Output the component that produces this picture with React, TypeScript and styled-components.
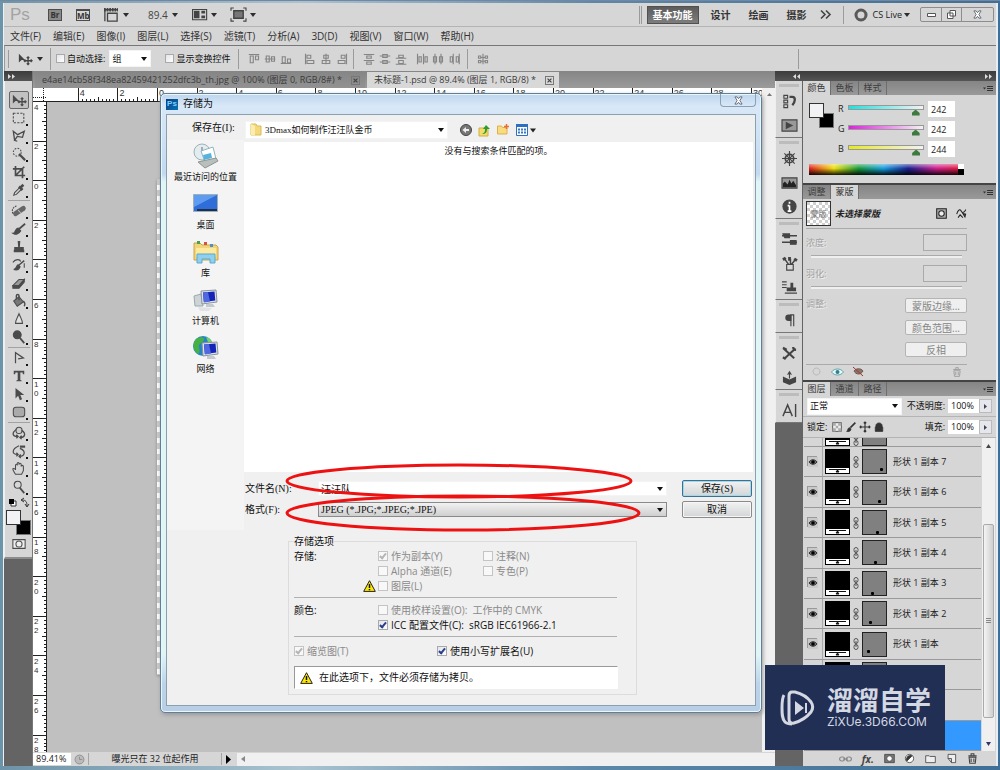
import React from "react";
import styled, { createGlobalStyle } from "styled-components";

const UI = `"Open Sans", "Noto Sans CJK SC", sans-serif`;
const SONG = `"Liberation Serif", "Noto Sans CJK SC", serif`;

const Global = createGlobalStyle`
  *, *::before, *::after { box-sizing: border-box; }
  body { margin: 0; background: #7fa3b8; font-family: ${UI}; font-size: 10px; line-height: 12px; color: #222; }
  button, input, select { font: inherit; color: inherit; margin: 0; padding: 0; border-radius: 0; }
  button { background: none; border: 0; }
  p, h2, ul { margin: 0; padding: 0; font-size: inherit; font-weight: inherit; list-style: none; }
`;

/* ---------- window frame ---------- */

const Desktop = styled.div`
  position: relative;
  display: flex;
  flex-direction: column;
  height: 100vh;
  min-height: 770px;
  overflow: hidden;
  padding: 2px 2px 4px 3px;
  background: linear-gradient(90deg, #6d93a8, #a9c3d0 30%, #5b87a8 60%, #3f6f96);
  border-top: 1px solid #7587a0;
`;

const Frame = styled.div`
  display: flex;
  flex-direction: column;
  flex: 1;
  min-height: 0;
  background: #d6d6d6;
  border-left: 1px solid #e8f4f4;
  border-right: 2px solid #e4eef4;
`;

const AppBar = styled.header`
  display: flex;
  align-items: center;
  flex: none;
  height: 24px;
  padding: 0 2px 0 6px;
  border-bottom: 1px solid #b4b4b4;
`;

const PsMark = styled.span`
  width: 38px;
  font-family: "Liberation Sans", sans-serif;
  font-size: 17px;
  line-height: 20px;
  color: #a3a3a3;
`;

const Badge = styled.span<{ $folder?: boolean }>`
  width: 14px;
  height: 12px;
  margin-right: 14px;
  border: 1px solid #4c4c4c;
  border-top-width: ${(p) => (p.$folder ? 2 : 1)}px;
  background: ${(p) => (p.$folder ? "#d6d6d6" : "#8a8a8a")};
  font-size: 8px;
  line-height: 9px;
  font-weight: 700;
  text-align: center;
  color: #333;
`;

const BarButton = styled.button<{ $w: number }>`
  display: flex;
  align-items: center;
  justify-content: space-between;
  width: ${(p) => p.$w}px;
  margin-right: 14px;
  color: #444;
  span { padding-left: 5px; }
`;

const Arrow = styled.i`
  flex: none;
  border: 3px solid transparent;
  border-top: 4px solid #2d2d2d;
  border-bottom: 0;
`;

const Spacer = styled.span`
  flex: 1;
`;

const Workspace = styled.button<{ $on?: boolean }>`
  width: ${(p) => (p.$on ? 52 : 38)}px;
  height: 18px;
  font-weight: 700;
  font-size: 10px;
  ${(p) =>
    p.$on
      ? "background: linear-gradient(#5c5c5c, #7d7d7d); border: 1px solid #505050; color: #fff; margin-right: 3px;"
      : "color: #333;"}
`;

const Rule = styled.span<{ $h: number; $m: string }>`
  flex: none;
  width: 1px;
  height: ${(p) => p.$h}px;
  margin: ${(p) => p.$m};
  background: #9b9b9b;
`;

const More = styled.button`
  width: 20px;
  color: #444;
  svg { display: block; margin: 0 auto; }
`;

const Live = styled.button`
  display: flex;
  align-items: center;
  gap: 5px;
  margin-right: 10px;
  font-size: 9px !important;
  i { margin-left: -3px; }
`;

const WindowButtons = styled.div`
  display: flex;
  height: 15px;
  border: 1px solid #8d8d8d;
  border-radius: 2px;
  button { display: grid; place-items: center; width: 20px; }
  button + button { border-left: 1px solid #8d8d8d; }
  button:last-child { width: 32px; }
`;

const MenuBar = styled.nav`
  display: flex;
  align-items: center;
  flex: none;
  gap: 12px;
  height: 18px;
  padding-left: 6px;
  color: #333;
  white-space: nowrap;
`;

const OptionsBar = styled.div`
  display: flex;
  align-items: center;
  flex: none;
  height: 26px;
  padding-left: 3px;
  border-top: 1px solid #777;
  border-left: 1px solid #999;
  font-size: 9px;
  color: #111;
`;

const OptLabel = styled.label<{ $m: string }>`
  display: flex;
  align-items: center;
  gap: 2px;
  margin: ${(p) => p.$m};
  white-space: nowrap;
`;

const Check = styled.input.attrs({ type: "checkbox" })<{ $s?: number }>`
  appearance: none;
  flex: none;
  position: relative;
  width: ${(p) => p.$s ?? 9}px;
  height: ${(p) => p.$s ?? 9}px;
  border: 1px solid #a9a9a9;
  background: linear-gradient(135deg, #e2e4e8, #fff);
  &:checked::after {
    content: "";
    position: absolute;
    left: 2px;
    top: 0;
    width: 4px;
    height: 7px;
    border: solid #2b3f8f;
    border-width: 0 2px 2px 0;
    transform: rotate(40deg);
  }
  &:disabled { border-color: #c4c4c4; background: #f8f8f8; }
  &:disabled::after { border-color: #b5b5b5; }
`;

const Picker = styled.span<{ $w?: number; $h: number; $look?: "plain" | "button" }>`
  position: relative;
  display: flex;
  align-items: center;
  width: ${(p) => (p.$w ? `${p.$w}px` : "auto")};
  height: ${(p) => p.$h}px;
  background: ${(p) => (p.$look === "button" ? "linear-gradient(#f2f2f2, #cfcfcf)" : "#fff")};
  border: ${(p) => (p.$look === "button" ? "1px solid #8a8a8a" : "1px solid #f4f4f4")};
  color: #111;
  select, input {
    appearance: none;
    flex: 1;
    min-width: 0;
    height: 100%;
    padding: 0 14px 0 2px;
    border: 0;
    outline: 0;
    background: transparent;
  }
  &::after {
    content: "";
    position: absolute;
    right: 3px;
    border: 3px solid transparent;
    border-top: 4px solid #111;
    border-bottom: 0;
    pointer-events: none;
  }
`;

const AlignGroup = styled.div<{ $ml: number }>`
  display: flex;
  gap: 4px;
  margin-left: ${(p) => p.$ml}px;
  color: #858585;
  button { display: block; line-height: 0; }
`;

const Glyph = styled.svg`
  display: block;
  flex: none;
  overflow: visible;
`;

/* ---------- main area ---------- */

const Main = styled.div`
  display: flex;
  flex: 1;
  min-height: 0;
`;

const ToolColumn = styled.aside`
  flex: none;
  width: 29px;
  background: #646464;
  border-right: 1px solid #777;
`;

const DarkStrip = styled.div<{ $start?: number }>`
  display: flex;
  align-items: center;
  justify-content: space-between;
  flex: none;
  height: 10px;
  padding: 0 4px 0 ${(p) => p.$start ?? 4}px;
  background: linear-gradient(#3c3c3c, #555);
  color: #ddd;
`;

const ToolBox = styled.div`
  display: flex;
  flex-direction: column;
  align-items: center;
  padding: 10px 0 4px;
  background: #d6d6d6;
  border-bottom: 2px solid #8c8c8c;
  border-left: 1px solid #f0f0f0;
`;

const Tool = styled.button<{ $on?: boolean; $single?: boolean }>`
  position: relative;
  display: grid;
  place-items: center;
  width: 20px;
  height: 18px;
  border: ${(p) => (p.$on ? "1px solid #666" : "0")};
  border-radius: 2px;
  background: ${(p) => (p.$on ? "#c2c2c2" : "none")};
  color: #4b4b4b;
  &::after {
    content: "";
    position: absolute;
    right: 1px;
    bottom: 1px;
    width: 2px;
    height: 2px;
    background: ${(p) => (p.$on || p.$single ? "none" : "#111")};
  }
`;

const ToolRule = styled.span`
  width: 22px;
  height: 1px;
  margin: 1px 0;
  background: #a2a2a2;
`;

const Doc = styled.section`
  display: flex;
  flex-direction: column;
  flex: 1;
  min-width: 0;
`;

const TabBar = styled.div`
  display: flex;
  align-items: flex-end;
  flex: none;
  height: 17px;
  gap: 2px;
  padding-left: 2px;
  background: linear-gradient(#858585, #9b9b9b);
`;

const DocTab = styled.button<{ $on?: boolean }>`
  display: flex;
  align-items: center;
  gap: 9px;
  height: 16px;
  padding: 0 5px 0 7px;
  white-space: nowrap;
  font-size: 9px;
  background: ${(p) => (p.$on ? "#d8d8d8" : "linear-gradient(#868686, #929292)")};
  color: #3a3a3a;
  svg { border: 1px solid #777; }
`;

const DocBody = styled.div`
  display: flex;
  flex: 1;
  min-height: 0;
`;

const DocMain = styled.div`
  display: flex;
  flex-direction: column;
  flex: 1;
  min-width: 0;
`;

const HRuler = styled.svg`
  display: block;
  flex: none;
  width: 100%;
  height: 14px;
  background: #fff;
  font-family: "Liberation Sans", sans-serif;
`;

const CanvasRow = styled.div`
  display: flex;
  flex: 1;
  min-height: 0;
`;

const VRuler = styled.svg`
  display: block;
  flex: none;
  width: 14px;
  height: 100%;
  background: #fff;
  font-family: "Liberation Sans", sans-serif;
`;

const Canvas = styled.div`
  flex: 1;
  min-width: 0;
  overflow: hidden;
  background: #c0c0c0;
  padding: 77px 0 0 110px;
`;

const Artboard = styled.div`
  width: 75%;
  height: 496px;
  background: repeating-conic-gradient(#fff 0 25%, #cbcbcb 0 50%) 0 0 / 11px 11px;
  box-shadow: 0 1px 3px #888;
`;

const VScroll = styled.div`
  flex: none;
  width: 13px;
  background: #f0f0f0;
  padding: 5px 5px;
`;

const StatusBar = styled.footer`
  display: flex;
  align-items: center;
  flex: none;
  height: 14px;
  background: #d6d6d6;
  color: #222;
`;

const Zoom = styled.input`
  width: 38px;
  height: 12px;
  margin-right: 3px !important;
  padding-left: 3px !important;
  border: 0;
  background: #fff;
  font-size: 9px !important;
`;

const StatusText = styled.span`
  width: 134px;
  margin-left: 3px;
  border: solid #a5a5a5;
  border-width: 0 1px;
  text-align: center;
  font-size: 9px;
`;

const HScroll = styled.div`
  flex: 1;
  display: flex;
  align-items: center;
  height: 13px;
  padding-left: 4px;
  margin-left: 3px;
  background: #f0f0f0;
`;

/* ---------- right side ---------- */

const Side = styled.aside`
  display: flex;
  flex-direction: column;
  flex: none;
  width: 221px;
  background: #646464;
`;

const SideBody = styled.div`
  display: flex;
  flex: 1;
  min-height: 0;
`;

const Dock = styled.div`
  flex: none;
  width: 28px;
  padding-right: 1px;
`;

const DockGroup = styled.div`
  padding-top: 8px;
  background: #d6d6d6;
  border-bottom: 1px solid #777;
  border-left: 1px solid #eee;
  background-image: linear-gradient(#bcbcbc, #bcbcbc);
  background-size: 20px 3px;
  background-position: 3px 3px;
  background-repeat: no-repeat;
  button { display: grid; place-items: center; width: 100%; height: 24px; color: #444; }
`;

const Panels = styled.div`
  display: flex;
  flex-direction: column;
  flex: 1;
  min-width: 0;
`;

const Panel = styled.section<{ $grow?: boolean }>`
  display: flex;
  flex-direction: column;
  flex: ${(p) => (p.$grow ? "1" : "none")};
  min-height: 0;
  background: #d6d6d6;
  & + & { border-top: 2px solid #444; }
`;

const PanelTabs = styled.div`
  display: flex;
  align-items: center;
  flex: none;
  height: 14px;
  padding-right: 3px;
  background: linear-gradient(#858585, #999);
  color: #444;
`;

const PanelTab = styled.button<{ $on?: boolean }>`
  width: 28px;
  height: 14px;
  border-right: 1px solid #6e6e6e;
  background: ${(p) => (p.$on ? "#d6d6d6" : "none")};
  font-size: 9px;
  color: ${(p) => (p.$on ? "#333" : "#3d3d3d")};
`;

const ColorBody = styled.div`
  display: grid;
  grid-template-columns: 29px minmax(0, 1fr);
  height: 88px;
  padding: 4px 32px 5px 6px;
`;

const Swatches = styled.div<{ $mt: number }>`
  position: relative;
  width: 25px;
  height: 25px;
  margin-top: ${(p) => p.$mt}px;
  &::before, &::after {
    content: "";
    position: absolute;
    width: 15px;
    height: 15px;
  }
  &::before { right: 0; bottom: 0; background: #000; border: 1px solid #777; }
  &::after { left: 0; top: 0; background: #f2f2f4; border: 1px solid #333; }
`;

const Channel = styled.label<{ $c: string }>`
  display: flex;
  align-items: center;
  height: 20px;
  margin-right: 9px;
  font-size: 9px;
  line-height: 12px;
  span { width: 10px; }
  input[type="range"] {
    appearance: none;
    flex: 1;
    min-width: 0;
    height: 13px;
    margin: 2px 4px 0 0;
    background: none;
  }
  input[type="range"]::-webkit-slider-runnable-track {
    height: 5px;
    margin-bottom: 6px;
    border: 1px solid #999;
    background: linear-gradient(90deg, ${(p) => p.$c}, #f2f2f2);
  }
  input[type="range"]::-webkit-slider-thumb {
    appearance: none;
    width: 8px;
    height: 6px;
    margin-top: 4px;
    background: #3d7a3d;
    clip-path: polygon(50% 0, 100% 60%, 100% 100%, 0 100%, 0 60%);
  }
`;

const NumberBox = styled.input`
  width: 27px;
  height: 16px;
  padding-left: 3px !important;
  border: 0;
  background: #fff;
  font-size: 9px !important;
`;

const Spectrum = styled.div`
  grid-column: 1 / -1;
  display: flex;
  height: 11px;
  margin-top: 2px;
  background:
    linear-gradient(rgba(255, 255, 255, 0.5), transparent 40%, rgba(0, 0, 0, 0.9)),
    linear-gradient(90deg, #e02020, #f0e010 16%, #1a9a3a 32%, #18a0e0 48%, #1a2090 64%, #d02090 82%, #e02030);
  &::after { content: ""; width: 6px; margin-left: auto; background: linear-gradient(#fff 50%, #000 50%); }
`;

const MaskBody = styled.div`
  display: flex;
  flex-direction: column;
  padding: 2px 29px 0 3px;
  height: 181px;
  font-size: 9px;
  color: #a2a2a2;
`;

const MaskHead = styled.div`
  display: flex;
  align-items: center;
  gap: 4px;
  padding-bottom: 2px;
  border-bottom: 1px solid #aaa;
  color: #222;
  strong { flex: 1; font-style: italic; }
  button + button { margin-left: 5px; }
`;

const MaskThumb = styled.span`
  width: 25px;
  height: 25px;
  border: 1px solid #333;
  background: repeating-conic-gradient(#fff 0 25%, #cfcfcf 0 50%) 0 0 / 6px 6px;
  color: #777;
  font-size: 8px;
  line-height: 23px;
  text-align: center;
`;

const MaskField = styled.label`
  display: grid;
  grid-template-columns: 1fr 44px;
  align-items: center;
  height: 31px;
  padding-top: 3px;
  text-shadow: 1px 1px #eee;
  input { height: 17px; width: 44px; border: 1px solid #aaa; background: #d9d9d9; }
  &::after {
    content: "";
    grid-column: 1 / -1;
    height: 3px;
    margin: 0 5px;
    background: #efefef;
    border-top: 1px solid #aaa;
  }
`;

const MaskActions = styled.div`
  display: flex;
  justify-content: space-between;
  flex: 1;
  padding-top: 7px;
  text-shadow: 1px 1px #eee;
  div { display: flex; flex-direction: column; gap: 7px; }
  button {
    width: 62px;
    height: 15px;
    border: 1px solid #b4b4b4;
    border-radius: 2px;
    background: #efefef;
    color: #858585;
    font-size: 10px;
    text-shadow: none;
  }
`;

const MaskFoot = styled.div`
  display: flex;
  align-items: center;
  gap: 9px;
  height: 16px;
  padding: 0 5px 2px;
  border-top: 1px solid #aaa;
  button:last-child { margin-left: auto; }
`;

const LayerBar = styled.div`
  display: flex;
  align-items: center;
  flex: none;
  height: 21px;
  padding: 0 4px 0 4px;
  border-bottom: 1px solid #b4b4b4;
  font-size: 9px;
  color: #111;
  white-space: nowrap;
  label { display: flex; align-items: center; gap: 3px; }
`;

const Percent = styled.span`
  display: flex;
  height: 14px;
  background: #fff;
  input { width: 31px; border: 0; padding-left: 3px; background: none; }
  button { width: 13px; border: 1px solid #bbb; background: #e6e6ee; display: grid; place-items: center; }
`;

const LockIcons = styled.span`
  display: flex;
  flex: 1;
  gap: 4px;
  margin-left: 5px;
  color: #333;
`;

const LayerArea = styled.div`
  display: flex;
  flex: 1;
  min-height: 0;
`;

const LayerList = styled.ul`
  display: flex;
  flex-direction: column;
  flex: 1;
  min-width: 0;
  overflow: hidden;
  padding: 0 1px;
`;

const Layer = styled.li<{ $cut?: boolean; $selected?: boolean }>`
  display: flex;
  align-items: ${(p) => (p.$cut ? "flex-end" : "center")};
  flex: ${(p) => (p.$cut ? "0 0 9px" : "1 1 0")};
  min-height: 0;
  overflow: hidden;
  border-bottom: 1px solid #999;
  background: ${(p) => (p.$selected ? "#3399ff" : "none")};
  font-size: 9px;
  color: #222;
  white-space: nowrap;
`;

const Eye = styled.button`
  display: grid;
  place-items: center;
  align-self: stretch;
  flex: none;
  width: 19px;
  border-right: 1px solid #aaa;
  svg { background: #c9c9c9; box-shadow: -1px -1px #999; }
`;

const FillThumb = styled.span`
  flex: none;
  display: grid;
  align-content: end;
  width: 25px;
  height: 25px;
  margin: 0 3px 0 2px;
  border: 1px solid #000;
  background: linear-gradient(#000 18px, #fff 18px);
`;

const ShapeThumb = styled.span`
  flex: none;
  width: 25px;
  height: 25px;
  margin: 0 6px 0 3px;
  border: 1px solid #222;
  background: #808080;
`;

const LayerScroll = styled.div`
  display: flex;
  flex-direction: column;
  align-items: center;
  flex: none;
  width: 13px;
  margin-right: 1px;
  padding: 6px 0 5px;
  background: #f0f0f0;
`;

const ScrollThumb = styled.div`
  width: 11px;
  height: 194px;
  margin: auto 0 24px;
  border: 1px solid #aaa;
  border-radius: 2px;
  background: linear-gradient(90deg, #f4f4f4, #cfcfcf);
  display: grid;
  place-items: center;
`;

const LayerFoot = styled.div`
  display: flex;
  align-items: center;
  justify-content: space-between;
  flex: none;
  height: 15px;
  padding: 0 18px 0 36px;
  color: #444;
`;

/* ---------- save dialog ---------- */

const Dialog = styled.form`
  position: absolute;
  left: 160px;
  right: 238px;
  top: 92px;
  padding: 0 5px 6px;
  border: 1px solid #5f7f96;
  border-radius: 5px;
  background:
    linear-gradient(#bcd5ee 0, #d9e8f8 12px, #c3d9f0 80px, #e0f6f6 88px, #e0f6f6 560px, #bdd3ea 590px, #b7cfe6);
  box-shadow: inset 0 0 0 1px #eaf6fc, 1px 2px 4px #999;
  font-family: ${SONG};
  color: #111;
`;

const TitleBar = styled.div`
  display: flex;
  align-items: center;
  height: 20px;
  gap: 5px;
`;

const PsIcon = styled.span`
  width: 12px;
  height: 11px;
  background: linear-gradient(135deg, #0b3d80, #0873b8);
  color: #7cd0ff;
  font: 700 8px/10px "Liberation Sans", sans-serif;
  text-align: center;
`;

const CloseButton = styled.button`
  align-self: flex-start;
  display: grid;
  place-items: center;
  width: 36px;
  height: 13px;
  margin-left: auto;
  border: 1px solid #8aa0b5;
  border-top: 0;
  border-radius: 0 0 4px 4px;
`;

const DialogBody = styled.div`
  border: 1px solid #8aa0ac;
  background: #f0f0f0;
  padding-bottom: 10px;
`;

const LookIn = styled.div`
  display: flex;
  align-items: center;
  height: 25px;
  padding: 4px 0 0 25px;
  label { width: 53px; padding-bottom: 3px; }
  label + span { width: 203px; font-size: 9px; padding-left: 4px; gap: 1px; }
  button { margin-left: 7px; }
  button:nth-of-type(1) { margin-left: 12px; }
`;

const Split = styled.div`
  display: grid;
  grid-template-columns: 77px 1fr;
`;

const Places = styled.ul`
  background: #f4f4f4;
  padding-top: 1px;
  li button {
    display: flex;
    flex-direction: column;
    align-items: center;
    width: 100%;
    height: 48px;
    font-size: 9px;
  }
  svg { margin: 2px 0 2px; }
`;

const FileArea = styled.div`
  padding: 2px 2px 0 0;
`;

const FileList = styled.div`
  height: 330px;
  padding-top: 3px;
  background: #fff;
  text-align: center;
  font-size: 9px;
`;

const FieldRow = styled.div`
  display: flex;
  align-items: center;
  height: 21px;
  label { width: 74px; padding-left: 1px; }
  label + span { flex: 1; }
`;

const DialogButton = styled.button<{ $main?: boolean }>`
  width: 70px;
  height: 17px;
  margin: 0 1px 0 15px;
  border: 1px solid ${(p) => (p.$main ? "#3a7191" : "#8a8a8a")};
  border-radius: 2px;
  box-shadow: inset 0 0 0 1px ${(p) => (p.$main ? "#a5d6ea" : "#f6f6f6")};
  background: linear-gradient(#f2f2f2, #d2d5d6);
`;

const Fields = styled.div`
  margin-top: 6px;
  height: 52px;
`;

const SaveOptions = styled.fieldset`
  width: 349px;
  max-width: 100%;
  margin: 5px 0 0 121px;
  padding: 1px 19px 5px 5px;
  border: 1px solid #dcdcdc;
  font-family: ${UI};
  font-size: 10px;
  legend { height: 12px; padding: 0; }
`;

const OptGrid = styled.div`
  display: grid;
  grid-template-columns: 69px 15px 105px 1fr;
  grid-auto-rows: 15px;
  align-items: center;
  white-space: nowrap;
`;

const OptCheck = styled.label<{ $off?: boolean; $col?: string }>`
  display: flex;
  align-items: center;
  gap: 3px;
  grid-column: ${(p) => p.$col ?? "3"};
  color: ${(p) => (p.$off ? "#8a8a8a" : "#111")};
`;

const Line = styled.hr`
  height: 1px;
  margin: 4px 0;
  border: 0;
  background: #b0b0b0;
`;

const Lower = styled.div`
  display: grid;
  grid-template-columns: 143px 1fr;
  height: 25px;
  padding-bottom: 5px;
  align-items: center;
`;

const Notice = styled.p`
  display: flex;
  align-items: center;
  gap: 6px;
  height: 23px;
  margin-right: -1px;
  padding-left: 5px;
  border: 1px solid #fff;
  border-top-color: #999;
  border-left-color: #999;
  background: #fff;
  font-family: ${SONG};
  font-size: 10px;
`;

const Marks = styled.svg`
  position: absolute;
  left: 120px;
  top: 362px;
  pointer-events: none;
`;

const Watermark = styled.div`
  position: absolute;
  right: 55px;
  bottom: 20px;
  display: flex;
  align-items: center;
  gap: 13px;
  width: 180px;
  height: 85px;
  padding-left: 15px;
  background: #222f55;
  color: #d4d8e2;
`;

const MarkText = styled.div`
  font-family: Inter, "Noto Sans CJK SC", sans-serif;
  p:first-child { font-size: 26px; line-height: 28px; font-weight: 700; }
  p:last-child { font-size: 12px; line-height: 13px; }
`;

/* ---------- drawings ---------- */

type IconProps = { children: React.ReactNode; s?: number; w?: number; vb?: string };
const Ic = ({ children, s = 14, w = 1.2, vb = "0 0 16 16" }: IconProps) => (
  <Glyph width={s} height={s} viewBox={vb} fill="none" stroke="currentColor" strokeWidth={w} aria-hidden="true">
    {children}
  </Glyph>
);

const MoveArt = (
  <>
    <path d="M1 2v10l3-3h4z" fill="currentColor" stroke="none" />
    <path
      d="M11.500 5.500v9M7 10h9M10 7l1.500-1.500L13 7M10 13l1.500 1.500L13 13M8.500 8.500L7 10l1.500 1.500M14.500 8.500L16 10l-1.500 1.500"
      strokeWidth="1.500"
    />
  </>
);

const toolArt: (React.ReactNode | "rule")[] = [
  MoveArt,
  <rect x="1.500" y="2.500" width="12" height="11" strokeDasharray="2.500 1.500" />,
  <path d="M3 13L1.500 2.500l5 4 7.500-4-2 7-6-1L3 13l3 1" strokeWidth="1.500" />,
  <>
    <circle cx="6" cy="6" r="4.500" strokeDasharray="2 1.500" />
    <path d="M8 8l7 7" strokeWidth="2.500" />
  </>,
  <path d="M4 1v11h11M1 4.500h11V15M4 12L14 2" strokeWidth="1.900" />,
  <>
    <path d="M2 14l1-3 6-6 2 2-6 6z" />
    <path d="M8 4l4 4M10 5l3-3" strokeWidth="3" />
  </>,
  "rule",
  <>
    <path d="M4 11L13 5" strokeWidth="5.500" strokeLinecap="round" stroke="#666" />
    <path d="M7 7l3 3" stroke="#bbb" />
    <path d="M1 11c-2-5 1-8 5-9" strokeDasharray="2 1" />
  </>,
  <>
    <path d="M8 8l7-6" strokeWidth="2" />
    <path d="M1 13c3 0 2-5 6-6l3 3c-2 4-6 5-9 3z" fill="currentColor" />
  </>,
  <path d="M6.500 1h3L9 8h4.500v3H14v3H2v-3h.5V8H7z" fill="currentColor" stroke="none" />,
  <>
    <path d="M2 13c3 0 3-4 5-5l2 2c-1 3-4 4-7 3zM8 8l6-5" fill="currentColor" strokeWidth="1.600" />
    <path d="M1 5c3-4 8-4 9-1M14 6v5" />
  </>,
  <>
    <path d="M1 11l7-7h6l-6 7z" fill="#999" />
    <path d="M1 11v3h7l6-7V4l-6 7z" fill="currentColor" />
  </>,
  <>
    <path d="M2 8l6-5 5 6-7 5z" fill="#777" />
    <path d="M5 6V2c0-2 3-2 3 0v5M13 8c2 2 2 4 1 6" strokeWidth="1.600" />
  </>,
  <path d="M8 2c2 5 4 7 4 11H4c0-4 2-6 4-11z" fill="#e2e2e2" />,
  <>
    <circle cx="6" cy="5.500" r="4.500" fill="currentColor" />
    <path d="M9 9l5 6" strokeWidth="2" />
  </>,
  "rule",
  <path d="M4 14V2l9 6-6 1" strokeWidth="1.400" />,
  <path d="M2 2h12v4h-1.500L12 4H9.500v8.500L11 13v1H5v-1l1.500-.5V4H4l-.5 2H2z" fill="currentColor" stroke="none" />,
  <path d="M4 1v12l3-3 2 5 2.500-1-2-5H14z" fill="currentColor" stroke="none" />,
  <rect x="1.500" y="2.500" width="13" height="11" rx="3" fill="#aaa" />,
  "rule",
  <>
    <circle cx="8" cy="5" r="3.500" fill="#ccc" />
    <path d="M5 4C-1 8 1 12 6 12M11 5c6 4 3 8-1 8M5 10l2 2-2 2M11 11l-2 2 2 2" strokeWidth="1.500" />
  </>,
  <>
    <path d="M8 2C-1 6 0 12 6 12M9 5c8 3 5 9 0 9M5 10l2 2-2 2M10 12l-2 2 2 2" strokeWidth="1.400" />
    <path d="M9 3h6" strokeWidth="2.500" />
  </>,
  <path d="M4 14C2 11 1 9 1 8s2-1 3 1V4c0-2 2-2 2 0V2c0-2 2-2 2 0v1c0-2 2.500-2 2.500 0v2c0-1.500 2.500-1.500 2.500 0v5l-2 4z" />,
  <>
    <circle cx="6.500" cy="5.500" r="4" />
    <path d="M9 9l5 6" strokeWidth="2" />
  </>,
];

const dockArt: React.ReactNode[][] = [
  [
    <>
      <path d="M2 1.500h4v3H2zM2 6.500h4v3H2zM2 11.500h4v3H2z" />
      <path d="M8 3h3c4 0 3 6 0 9" strokeWidth="2.500" />
    </>,
    <>
      <path d="M0 2h16v12H0z" fill="#999" />
      <path d="M4 4l8 4-8 4z" fill="currentColor" stroke="none" />
    </>,
  ],
  [
    <>
      <circle cx="8" cy="8" r="4.500" strokeWidth="1.800" />
      <path d="M8 0v16M0 8h16M2.500 2.500l11 11M13.500 2.500l-11 11" />
    </>,
    <>
      <path d="M0 3h16v11H0z" fill="#999" />
      <path d="M1 13V9l2-2 3 3 2-5 2 4 2-3 3 5v2z" fill="#222" stroke="none" />
    </>,
    <>
      <circle cx="8" cy="8" r="7" fill="#444" />
      <path d="M8 3v2M8 7v6M6 7h2M6 13h4" stroke="#fff" strokeWidth="1.800" />
    </>,
  ],
  [
    <>
      <path d="M0 4h16M0 11h16" strokeWidth="1.500" />
      <path d="M1 2h7v4H3zM9 9h6v4H9z" fill="currentColor" />
    </>,
    <>
      <path d="M5 9h7v6H5z" />
      <path d="M7 9L2 2M9 9V3M10 9l5-6" strokeWidth="1.600" />
      <path d="M1 4l3-2M8 1v4M13 3l3 2" strokeWidth="3" />
    </>,
    <>
      <path d="M0 2h5M0 5h5M0 8h5M3 14h13" />
      <path d="M9 3h3v5h3v4H5V8h4z" fill="currentColor" stroke="none" />
    </>,
  ],
  [
    <>
      <path d="M9.500 2v12M12.500 2v12M9 2h4" />
      <path d="M10 1.500H7a3.500 3.500 0 000 7h3z" fill="currentColor" stroke="none" />
    </>,
  ],
  [
    <>
      <path d="M2 3l11 10M14 3L3 13" strokeWidth="2.200" />
      <path d="M1 2l4 2M12 1c0 3 1 3 3 3M1 12l3 2" strokeWidth="2.500" />
    </>,
    <>
      <path d="M1 7l7 3 7-3v6l-7 3-7-3z" fill="currentColor" stroke="none" />
      <path d="M8 9V2M6 5l2-3 2 3" />
    </>,
  ],
  [<path d="M1 14L6 2l5 12M3 10h6M14.500 1v14" strokeWidth="1.500" />],
];

const alignArt = [
  "M1 2h14M3 4h4v9H3zM10 4h4v5h-4z",
  "M1 8h14M3 4h4v8H3zM10 5h4v6h-4z",
  "M1 14h14M3 5h4v8H3zM10 8h4v5h-4z",
  "M2 1v14M4 3h5v4H4zM4 10h9v4H4z",
  "M8 1v14M5 3h6v4H5zM3 10h10v4H3z",
  "M14 1v14M7 3h5v4H7zM3 10h9v4H3z",
  "M1 2h14M5 4h6v3H5zM1 10h14M5 12h6v3H5z",
  "M1 4h14M5 2h6v4H5zM1 12h14M5 10h6v4H5z",
  "M1 7h14M5 3h6v3H5zM1 15h14M5 10h6v4H5z",
  "M2 1v14M4 5h3v7H4zM10 1v14M12 5h3v7h-3z",
  "M4 1v14M2 5h4v7H2zM12 1v14M10 5h4v7h-4z",
  "M7 1v14M3 5h3v7H3zM15 1v14M11 5h3v7h-3z",
  "M8 1v14M2 4h3v3H2zM2 10h3v3H2zM11 4h3v3h-3zM11 10h3v3h-3zM5 6h6M5 11h6",
];

const Warn = () => (
  <Glyph width="13" height="12" viewBox="0 0 13 12" aria-hidden="true">
    <path d="M6.500.7L12.300 11.400H.7z" fill="#ffe600" stroke="#222" />
    <path d="M6.500 4v4M6.500 9v1.300" stroke="#111" strokeWidth="1.500" />
  </Glyph>
);

const Cross = () => (
  <Glyph width="9" height="9" viewBox="0 0 10 10" fill="#fff" stroke="#5b6570">
    <path d="M1 1h2.500L5 3l1.500-2H9L6.500 5 9 9H6.500L5 7 3.500 9H1l2.500-4z" />
  </Glyph>
);

const Chevrons = ({ left }: { left?: boolean }) => (
  <Glyph width="7" height="5" viewBox="0 0 7 5" fill="currentColor">
    <path d={left ? "M3 0v5L0 2.500zM7 0v5L4 2.500z" : "M0 0v5l3-2.500zM4 0v5l3-2.500z"} />
  </Glyph>
);

const PITCH = 39.6;
const TopRuler = () => (
  <HRuler aria-hidden="true">
    <g stroke="#222" shapeRendering="crispEdges">
      {Array.from({ length: 205 }, (_, i) => {
        const x = 125 + ((i - 20) * PITCH) / 10 - 0.5;
        if (x < 14) return null;
        const h = i % 10 === 0 ? 14 : i % 5 === 0 ? 5 : 3;
        return <line key={i} x1={x} x2={x} y1={14 - h} y2={14} />;
      })}
      <path d="M0 13.500H742" />
      <path d="M10.500 0V14M0 9.500H14" strokeDasharray="1 1" />
    </g>
    <g fontSize="9" fill="#333">
      {Array.from({ length: 18 }, (_, i) => (
        <text key={i} x={126 + (i - 2) * PITCH} y="8">
          {Math.abs(i - 2) * 2}
        </text>
      ))}
    </g>
  </HRuler>
);

const LeftRuler = () => (
  <VRuler aria-hidden="true">
    <g stroke="#222" shapeRendering="crispEdges">
      {Array.from({ length: 170 }, (_, i) => {
        const y = (i * PITCH) / 10 - 0.5;
        const w = i % 10 === 0 ? 14 : i % 5 === 0 ? 5 : 3;
        return <line key={i} y1={y} y2={y} x1={14 - w} x2={14} />;
      })}
      <path d="M13.500 0V700" />
    </g>
    <g fontSize="8" fill="#333">
      {Array.from({ length: 17 }, (_, i) =>
        String(Math.abs(i - 2) * 2)
          .split("")
          .map((d, k) => (
            <text key={`${i}-${k}`} x="1" y={8 + Math.floor(i * PITCH) + k * 9}>
              {d}
            </text>
          ))
      )}
    </g>
  </VRuler>
);

const Screen = ({ x, y }: { x: number; y: number }) => (
  <g transform={`translate(${x} ${y})`}>
    <path d="M0 1l15-1 1 12-15 2z" fill="#dde3e8" stroke="#8a949c" />
    <path d="M2 2.500l11.500-1 .8 9-11.500 1.600z" fill="#1524b8" />
    <path d="M2 2.500l5-.4 2 9.400-6 .9z" fill="#5068e0" />
    <path d="M5 14h7l2 3H5z" fill="#c3c9cd" />
  </g>
);

const placeArt = [
  <>
    <circle cx="9" cy="9" r="8" fill="#e3ecef" stroke="#9fb0b5" />
    <path d="M9 4v5l4 2" stroke="#668" fill="none" />
    <path d="M8 8l12-4 3 12-11 3z" fill="#fff" stroke="#8fb5c4" />
    <path d="M10 12l8-2 1 5-8 2z" fill="#56b3dd" />
    <path d="M5 19l18-4 2 3-13 7z" fill="#b9bfbc" stroke="#8d9490" />
  </>,
  <>
    <path d="M.5 3.500h24v17H.5z" fill="#2f6ed8" stroke="#9db0b8" />
    <path d="M1 4h23L1 16z" fill="#5f9bf0" />
    <path d="M4 18h20v2H4z" fill="#1b2f50" />
  </>,
  <>
    <path d="M1 4h6l2 2h14l2 2v13H1z" fill="#f2d578" stroke="#c8a64c" />
    <path d="M3 9h20v9H3z" fill="#fbeaa0" />
    <path d="M4 2h3v3H4z" fill="#4aa04a" />
    <path d="M11 3h3v3h-3z" fill="#d8503f" />
    <path d="M17 5h3v3h-3z" fill="#4f8fd0" />
    <path d="M4 24v-9h18v9h-5v-4H9v4z" fill="#8fd0ee" stroke="#5ba8d0" />
  </>,
  <>
    <path d="M1 9l7-2 2 12-8 0z" fill="#cdd3d6" stroke="#9aa" />
    <Screen x={8} y={3} />
    <path d="M5 20l14 1-3 3H7z" fill="#dfe3e6" />
  </>,
  <>
    <circle cx="10" cy="11" r="10" fill="#2584c8" />
    <path d="M3 4c5-3 9-2 8 1s-5 3-5 6 2 6-1 8C0 16-1 8 3 4z" fill="#47b044" />
    <path d="M13 2c4 1 6 4 7 7l-5-2z" fill="#7bd06a" />
    <Screen x={9} y={7} />
  </>,
];
const placeNames = ["最近访问的位置", "桌面", "库", "计算机", "网络"];

const dots: [number, number][] = [
  [17, 18],
  [15, 19],
  [13, 20],
  [11, 20],
  [8, 20],
  [6, 19],
  [4, 17],
];
const layerNames = [
  "形状 1 副本 7",
  "形状 1 副本 6",
  "形状 1 副本 5",
  "形状 1 副本 4",
  "形状 1 副本 3",
  "形状 1 副本 2",
  "形状 1 副本",
];

const LayerThumbs = ({ dot }: { dot?: [number, number] }) => (
  <>
    <FillThumb>
      <Glyph width="23" height="5" viewBox="0 0 23 5" stroke="#111" fill="#111">
        <path d="M3 1.500h17" />
        <path d="M10 4l1.500-2L13 4z" />
      </Glyph>
    </FillThumb>
    <Glyph width="6" height="12" viewBox="0 0 6 12" fill="none" stroke="#555">
      <rect x="1" y=".5" width="4" height="5" rx="2" />
      <rect x="1" y="6.500" width="4" height="5" rx="2" />
      <path d="M3 3v6" />
    </Glyph>
    <ShapeThumb>
      {dot && (
        <Glyph width="23" height="23">
          <rect x={dot[0]} y={dot[1]} width="3" height="3" rx="1" />
        </Glyph>
      )}
    </ShapeThumb>
  </>
);

const EyeIcon = () => (
  <Glyph width="10" height="10" viewBox="0 0 10 10">
    <path d="M1 5c2-3 6-3 8 0-2 3-6 3-8 0z" fill="#777" stroke="#333" />
    <circle cx="5" cy="5" r="1.800" fill="#000" />
  </Glyph>
);

const PanelMenu = () => (
  <Glyph width="10" height="7" viewBox="0 0 10 7" stroke="#333">
    <path d="M0 2.500h3L1.500 4.500z" fill="#333" stroke="none" />
    <path d="M4 1.500h6M4 3.500h6M4 5.500h6" />
  </Glyph>
);

const TabStrip = ({ names, on }: { names: string[]; on: number }) => (
  <PanelTabs>
    {names.map((n, i) => (
      <PanelTab key={n} $on={i === on}>
        {n}
      </PanelTab>
    ))}
    <Spacer />
    <PanelMenu />
  </PanelTabs>
);

const Trash = ({ s = 11 }: { s?: number }) => (
  <Ic s={s}>
    <path d="M3 6h10l-1 9H4zM2 4h12M6 4V1h4v3M6 8v5M10 8v5" strokeWidth="1.600" />
  </Ic>
);

/* ---------- sections ---------- */

const AlignButtons = ({ from, to, ml }: { from: number; to: number; ml: number }) => (
  <AlignGroup $ml={ml}>
    {alignArt.slice(from, to).map((d) => (
      <button key={d} type="button">
        <Ic s={12} w={1.5}>
          <path d={d} />
        </Ic>
      </button>
    ))}
  </AlignGroup>
);

const Header = () => (
  <>
    <AppBar>
      <PsMark>Ps</PsMark>
      <Badge>Br</Badge>
      <Badge $folder>Mb</Badge>
      <BarButton $w={25} aria-label="查看额外内容">
        <Ic>
          <path d="M0 2h16M1 2v13M4 6h11v9H4z" strokeWidth="1.500" />
          <path d="M0 2h16" strokeWidth="4" strokeDasharray="2 1" />
        </Ic>
        <Arrow />
      </BarButton>
      <BarButton $w={35}>
        <span>89.4</span>
        <Arrow />
      </BarButton>
      <BarButton $w={25} aria-label="排列文档">
        <Ic s={15}>
          <path d="M.6 2.600h15v11H.6z" />
          <path d="M2 4h6v8H2zM10 4h4v3h-4zM10 9h4v3h-4z" fill="currentColor" stroke="none" />
        </Ic>
        <Arrow />
      </BarButton>
      <BarButton $w={25} aria-label="屏幕模式">
        <Ic s={15}>
          <path d="M3 4h10v8H3z" fill="#777" strokeWidth="1.500" />
          <path d="M0 4V1h3M13 1h3v3M16 12v3h-3M3 15H0v-3" />
        </Ic>
        <Arrow />
      </BarButton>
      <Spacer />
      <Rule $h={18} $m="0 1px 0 0" />
      <Rule $h={18} $m="0 5px 0 0" />
      <Workspace $on>基本功能</Workspace>
      <Workspace>设计</Workspace>
      <Workspace>绘画</Workspace>
      <Workspace>摄影</Workspace>
      <More aria-label="更多">
        <Glyph width="11" height="9" viewBox="0 0 11 9" fill="none" stroke="#444" strokeWidth="1.600">
          <path d="M1 .5l4 4-4 4M6 .5l4 4-4 4" />
        </Glyph>
      </More>
      <Rule $h={18} $m="0 10px 0 7px" />
      <Live>
        <Glyph width="14" height="14" viewBox="0 0 14 14" fill="none" stroke="#5a5a5a" strokeWidth="3">
          <circle cx="7" cy="7" r="5" />
        </Glyph>
        CS Live
        <Arrow />
      </Live>
      <WindowButtons>
        <button aria-label="最小化">
          <Glyph width="9" height="4" fill="#fff" stroke="#555">
            <path d="M.5.5h8v3h-8z" />
          </Glyph>
        </button>
        <button aria-label="还原">
          <Glyph width="9" height="9" fill="#fff" stroke="#555">
            <path d="M3 .5h5.500V6H3zM.5 3H6v5.500H.5z" />
          </Glyph>
        </button>
        <button aria-label="关闭">
          <Cross />
        </button>
      </WindowButtons>
    </AppBar>
    <MenuBar>
      {["文件(F)", "编辑(E)", "图像(I)", "图层(L)", "选择(S)", "滤镜(T)", "分析(A)", "3D(D)", "视图(V)", "窗口(W)", "帮助(H)"].map((m) => (
        <button key={m}>{m}</button>
      ))}
    </MenuBar>
    <OptionsBar>
      <Rule $h={18} $m="0 9px 0 0" />
      <BarButton $w={25} aria-label="移动工具">
        <Ic>{MoveArt}</Ic>
        <Arrow />
      </BarButton>
      <Rule $h={22} $m="0 5px 0 -7px" />
      <OptLabel $m="0 4px 0 0">
        <Check />
        自动选择:
      </OptLabel>
      <Picker $w={42} $h={17}>
        <select aria-label="自动选择">
          <option>组</option>
        </select>
      </Picker>
      <OptLabel $m="0 8px 0 14px">
        <Check />
        显示变换控件
      </OptLabel>
      <Rule $h={20} $m="0" />
      <AlignButtons from={0} to={3} ml={9} />
      <AlignButtons from={3} to={6} ml={12} />
      <Rule $h={20} $m="0 0 0 5px" />
      <AlignButtons from={6} to={9} ml={9} />
      <AlignButtons from={9} to={12} ml={9} />
      <Rule $h={20} $m="0 0 0 7px" />
      <AlignButtons from={12} to={13} ml={9} />
      <Spacer />
      <Rule $h={20} $m="0 197px 0 0" />
    </OptionsBar>
  </>
);

const Tools = () => (
  <ToolColumn>
    <DarkStrip>
      <Chevrons />
    </DarkStrip>
    <ToolBox>
      {toolArt.map((a, i) =>
        a === "rule" ? (
          <ToolRule key={i} />
        ) : (
          <Tool key={i} $on={i === 0} type="button">
            <Ic>{a}</Ic>
          </Tool>
        )
      )}
      <Glyph width="22" height="14" viewBox="0 2 22 14">
        <path d="M3 7h5v5H3z" fill="#fff" stroke="#333" />
        <path d="M1 5h5v5H1z" />
        <path d="M14 6c4 0 5 2 5 6M16 4l-3 2 3 2M17 10l2 3 2-3" fill="none" stroke="#333" />
      </Glyph>
      <Swatches $mt={0} />
      <Tool type="button" $single>
        <Ic>
          <path d="M1 3h14v10H1z" fill="#eee" />
          <circle cx="8" cy="8" r="3.500" />
        </Ic>
      </Tool>
    </ToolBox>
  </ToolColumn>
);

const TabClose = () => (
  <Glyph width="9" height="9" viewBox="0 0 9 9" stroke="#444" strokeWidth="1.500">
    <path d="M2 2l5 5M7 2L2 7" />
  </Glyph>
);

const Document = () => (
  <Doc>
    <TabBar>
      <DocTab>
        e4ae14cb58f348ea82459421252dfc3b_th.jpg @ 100% (图层 0, RGB/8#) *
        <TabClose />
      </DocTab>
      <DocTab $on>
        未标题-1.psd @ 89.4% (图层 1, RGB/8) *
        <TabClose />
      </DocTab>
    </TabBar>
    <DocBody>
      <DocMain>
        <TopRuler />
        <CanvasRow>
          <LeftRuler />
          <Canvas>
            <Artboard />
          </Canvas>
        </CanvasRow>
      </DocMain>
      <VScroll>
        <Glyph width="5" height="3" viewBox="0 0 5 3">
          <path d="M0 3h5L2.500 0z" fill="#777" />
        </Glyph>
      </VScroll>
    </DocBody>
    <StatusBar>
      <Zoom aria-label="缩放" defaultValue="89.41%" />
      <Ic s={11}>
        <circle cx="8" cy="8" r="6.500" fill="#bbb" stroke="#888" />
        <path d="M8 4v4h4" stroke="#888" />
      </Ic>
      <StatusText>曝光只在 32 位起作用</StatusText>
      <Glyph width="12" height="9" viewBox="0 0 12 9">
        <path d="M4 0l5 4.500L4 9z" />
      </Glyph>
      <HScroll>
        <Glyph width="4" height="6" viewBox="0 0 4 6" fill="#888">
          <path d="M4 0v6L0 3z" />
        </Glyph>
      </HScroll>
    </StatusBar>
  </Doc>
);

const ColorPanel = () => (
  <Panel>
    <TabStrip names={["颜色", "色板", "样式"]} on={0} />
    <ColorBody>
      <Swatches $mt={4} />
      <div>
        {[
          ["R", "#20e0e0", 242],
          ["G", "#e020e0", 242],
          ["B", "#e8e820", 244],
        ].map(([n, c, v]) => (
          <Channel key={n} $c={c as string}>
            <span>{n}</span>
            <input type="range" min="0" max="255" defaultValue={v} />
            <NumberBox aria-label={n as string} defaultValue={v} />
          </Channel>
        ))}
      </div>
      <Spectrum />
    </ColorBody>
  </Panel>
);

const MaskPanel = () => (
  <Panel>
    <TabStrip names={["调整", "蒙版"]} on={1} />
    <MaskBody>
      <MaskHead>
        <MaskThumb>蒙版</MaskThumb>
        <strong>未选择蒙版</strong>
        <button aria-label="像素蒙版">
          <Ic s={11} w={1.5}>
            <path d="M1 1h14v14H1z" fill="#aaa" />
            <circle cx="8" cy="8" r="4" fill="#eee" />
          </Ic>
        </button>
        <button aria-label="矢量蒙版">
          <Ic s={11}>
            <path d="M1 9C3 2 6 1 8 5s6-1 6-3M3 14l3-4 4 4M10 8l4 1-1 4z" strokeWidth="1.500" />
          </Ic>
        </button>
      </MaskHead>
      <MaskField>
        浓度:
        <input disabled />
      </MaskField>
      <MaskField>
        羽化:
        <input disabled />
      </MaskField>
      <MaskActions>
        调整:
        <div>
          <button>蒙版边缘...</button>
          <button>颜色范围...</button>
          <button>反相</button>
        </div>
      </MaskActions>
      <MaskFoot>
        <button aria-label="载入选区">
          <Ic s={11}>
            <circle cx="8" cy="8" r="5" strokeDasharray="2 1" />
          </Ic>
        </button>
        <button aria-label="应用蒙版">
          <Glyph width="13" height="8" viewBox="0 0 13 8">
            <path d="M.5 4c3-4 9-4 12 0-3 4-9 4-12 0z" fill="#dff" stroke="#6aa0a8" />
            <circle cx="6.500" cy="4" r="2" fill="#387c88" />
          </Glyph>
        </button>
        <button aria-label="停用蒙版">
          <Glyph width="11" height="9" viewBox="0 0 11 9">
            <path d="M1 4c2-3 7-3 9 0-2 4-7 4-9 0z" fill="#876" stroke="#755" />
            <path d="M0 0l10 9" stroke="#a33" />
          </Glyph>
        </button>
        <button aria-label="删除蒙版">
          <Trash s={10} />
        </button>
      </MaskFoot>
    </MaskBody>
  </Panel>
);

const PercentField = ({ label }: { label: string }) => (
  <label>
    {label}
    <Percent>
      <input defaultValue="100%" />
      <button aria-label={label}>
        <Glyph width="3" height="5" viewBox="0 0 3 5">
          <path d="M0 0v5l3-2.500z" fill="#444" />
        </Glyph>
      </button>
    </Percent>
  </label>
);

const LayersPanel = () => (
  <Panel $grow>
    <TabStrip names={["图层", "通道", "路径"]} on={0} />
    <LayerBar>
      <Picker $w={95} $h={17}>
        <select aria-label="混合模式">
          <option>正常</option>
        </select>
      </Picker>
      <Spacer />
      <PercentField label="不透明度:" />
    </LayerBar>
    <LayerBar>
      锁定:
      <LockIcons>
        <Ic s={10}>
          <path d="M1 1h14v14H1z" fill="#eee" />
          <path d="M1 1h5v5H1zM10 1h5v5h-5zM6 6h4v4H6zM1 10h5v5H1zM10 10h5v5h-5z" fill="#aaa" stroke="none" />
        </Ic>
        <Ic s={10}>
          <path d="M15 1L7 9" strokeWidth="2.500" />
          <path d="M1 15c2 0 1-6 5-6l2 2c0 4-4 5-7 4z" fill="currentColor" />
        </Ic>
        <Ic s={10} w={1.8}>
          <path d="M8 0v16M0 8h16M6 2l2-2 2 2M6 14l2 2 2-2M2 6L0 8l2 2M14 6l2 2-2 2" />
        </Ic>
        <Ic s={10}>
          <path d="M3 8V6c0-6 10-6 10 0v2h1v7H2V8z" fill="currentColor" />
        </Ic>
      </LockIcons>
      <PercentField label="填充:" />
    </LayerBar>
    <LayerArea>
      <LayerList>
        <Layer $cut>
          <Eye as="span" />
          <LayerThumbs />
        </Layer>
        {layerNames.map((n, i) => (
          <Layer key={n}>
            <Eye aria-label="可见性">
              <EyeIcon />
            </Eye>
            <LayerThumbs dot={dots[i]} />
            {n}
          </Layer>
        ))}
        <Layer>
          <Eye as="span" />
          <LayerThumbs />
        </Layer>
        <Layer />
        <Layer $selected />
      </LayerList>
      <LayerScroll>
        <Glyph width="5" height="4" viewBox="0 0 5 4">
          <path d="M0 4h5L2.500 0z" fill="#444" />
        </Glyph>
        <ScrollThumb>
          <Glyph width="5" height="6" stroke="#888">
            <path d="M0 .5h5M0 2.500h5M0 4.500h5" />
          </Glyph>
        </ScrollThumb>
        <Glyph width="5" height="4" viewBox="0 0 5 4">
          <path d="M0 0h5L2.500 4z" fill="#336" />
        </Glyph>
      </LayerScroll>
    </LayerArea>
    <LayerFoot>
      <Glyph width="13" height="6" viewBox="0 0 13 6" fill="none" stroke="#888" strokeWidth="1.200">
        <rect x=".6" y="1" width="5" height="4" rx="2" />
        <rect x="7.400" y="1" width="5" height="4" rx="2" />
        <path d="M4 3h5" />
      </Glyph>
      <strong>
        <em>fx.</em>
      </strong>
      <Ic s={11}>
        <path d="M1 2h14v12H1z" fill="#777" />
        <circle cx="8" cy="8" r="4" fill="#fff" />
      </Ic>
      <Ic s={11}>
        <circle cx="8" cy="8" r="6" fill="#fff" />
        <path d="M4 12a6 6 0 018-8z" fill="#333" />
      </Ic>
      <Ic s={11}>
        <path d="M1 4h5l1 1h8v9H1z" fill="#eee" />
      </Ic>
      <Ic s={11}>
        <path d="M3 2h11v12H8V8H3z" fill="#eee" />
        <path d="M3 8l5 6" />
      </Ic>
      <Trash />
    </LayerFoot>
  </Panel>
);

const SaveDialog = () => (
  <Dialog onSubmit={(e) => e.preventDefault()}>
    <TitleBar>
      <PsIcon>Ps</PsIcon>
      <h2>存储为</h2>
      <CloseButton type="button" aria-label="关闭">
        <Cross />
      </CloseButton>
    </TitleBar>
    <DialogBody>
      <LookIn>
        <label htmlFor="look">保存在(I):</label>
        <Picker $h={18}>
          <Glyph width="12" height="13" viewBox="0 0 12 13">
            <path d="M1 1h5l1 2h4v9H1z" fill="#f4d97b" stroke="#d9bb5c" />
            <path d="M1 1l4 2v9.500L1 12z" fill="#fbedb0" />
          </Glyph>
          <select id="look">
            <option>3Dmax如何制作汪汪队金币</option>
          </select>
        </Picker>
        <button type="button" aria-label="后退">
          <Glyph width="12" height="12" viewBox="0 0 12 12">
            <circle cx="6" cy="6" r="5.500" fill="#777" stroke="#444" />
            <path d="M9 5H6V3L2.500 6 6 9V7h3z" fill="#eee" />
          </Glyph>
        </button>
        <button type="button" aria-label="向上">
          <Glyph width="11" height="12" viewBox="0 0 11 12">
            <path d="M0 4h9v8H0z" fill="#f4dc6c" stroke="#cfae45" />
            <path d="M3 10c3-1 3-3 3-5H4l3-4 4 4H8c0 3-1 5-5 5z" fill="#2f9a2f" />
          </Glyph>
        </button>
        <button type="button" aria-label="新建文件夹">
          <Glyph width="12" height="11" viewBox="0 0 12 11">
            <path d="M.5 2h4l1 1.500H10V10H.5z" fill="#f9dc80" stroke="#dcb050" />
            <path d="M9.500 0v5M7 2.500h5" stroke="#e8702c" strokeWidth="1.500" />
          </Glyph>
        </button>
        <button type="button" aria-label="查看">
          <Glyph width="20" height="12" viewBox="0 0 20 12">
            <path d="M.5.5h11v11H.5z" fill="#fff" stroke="#2f6fc0" />
            <path d="M0 0h12v3H0z" fill="#2f6fc0" />
            <path d="M2 5.500h8M2 8.500h8" stroke="#3a78c4" strokeDasharray="2 1" strokeWidth="2" />
            <path d="M14 4.500h6l-3 4z" fill="#222" />
          </Glyph>
        </button>
      </LookIn>
      <Split>
        <Places>
          {placeNames.map((n, i) => (
            <li key={n}>
              <button type="button">
                <Glyph width="26" height="26" viewBox="0 0 26 26">
                  {placeArt[i]}
                </Glyph>
                {n}
              </button>
            </li>
          ))}
        </Places>
        <FileArea>
          <FileList>没有与搜索条件匹配的项。</FileList>
          <Fields>
            <FieldRow>
              <label htmlFor="fname">文件名(N):</label>
              <Picker $h={15}>
                <input id="fname" defaultValue="汪汪队" />
              </Picker>
              <DialogButton $main>保存(S)</DialogButton>
            </FieldRow>
            <FieldRow>
              <label htmlFor="format">格式(F):</label>
              <Picker $h={15} $look="button">
                <select id="format">
                  <option>JPEG (*.JPG;*.JPEG;*.JPE)</option>
                </select>
              </Picker>
              <DialogButton type="button">取消</DialogButton>
            </FieldRow>
          </Fields>
        </FileArea>
      </Split>
      <SaveOptions>
        <legend>存储选项</legend>
        <OptGrid>
          <span>存储:</span>
          <OptCheck $off>
            <Check $s={10} disabled defaultChecked />
            作为副本(Y)
          </OptCheck>
          <OptCheck $off $col="4">
            <Check $s={10} disabled />
            注释(N)
          </OptCheck>
          <OptCheck $off>
            <Check $s={10} disabled />
            Alpha 通道(E)
          </OptCheck>
          <OptCheck $off $col="4">
            <Check $s={10} disabled />
            专色(P)
          </OptCheck>
          <span />
          <Warn />
          <OptCheck $off>
            <Check $s={10} disabled />
            图层(L)
          </OptCheck>
        </OptGrid>
        <Line />
        <OptGrid>
          <span>颜色:</span>
          <OptCheck $off $col="3 / 5">
            <Check $s={10} disabled />
            使用校样设置(O):&nbsp; 工作中的 CMYK
          </OptCheck>
          <OptCheck $col="3 / 5">
            <Check $s={10} defaultChecked />
            ICC 配置文件(C):&nbsp; sRGB IEC61966-2.1
          </OptCheck>
        </OptGrid>
        <Line />
        <Lower>
          <OptCheck $off $col="1">
            <Check $s={10} disabled defaultChecked />
            缩览图(T)
          </OptCheck>
          <OptCheck $col="2">
            <Check $s={10} defaultChecked />
            使用小写扩展名(U)
          </OptCheck>
        </Lower>
        <Notice>
          <Warn />
          在此选项下，文件必须存储为拷贝。
        </Notice>
      </SaveOptions>
    </DialogBody>
    <Marks width="370" height="80" viewBox="0 0 370 80" fill="none" stroke="#ee1111" strokeWidth="3">
      <ellipse cx="178" cy="25" rx="172" ry="16" />
      <ellipse cx="182" cy="57" rx="176" ry="17" />
    </Marks>
  </Dialog>
);

export default function App() {
  return (
    <Desktop>
      <Global />
      <Frame>
        <Header />
        <Main>
          <Tools />
          <Document />
          <Side>
            <DarkStrip $start={18}>
              <Chevrons left />
              <Chevrons />
            </DarkStrip>
            <SideBody>
              <Dock>
                {dockArt.map((g, i) => (
                  <DockGroup key={i}>
                    {g.map((a, k) => (
                      <button key={k} type="button">
                        <Ic s={15}>{a}</Ic>
                      </button>
                    ))}
                  </DockGroup>
                ))}
              </Dock>
              <Panels>
                <ColorPanel />
                <MaskPanel />
                <LayersPanel />
              </Panels>
            </SideBody>
          </Side>
        </Main>
      </Frame>
      <SaveDialog />
      <Watermark>
        <Glyph width="34" height="36" viewBox="0 0 34 36" fill="none" stroke="currentColor" strokeWidth="3">
          <path d="M12 2h3c8 2 13 6 16 10 2 3 2 7 0 10-4 5-10 9-17 11-3 1-5-1-5-4V6c0-2 1-4 3-4z" />
          <path d="M4 5C2 8 2 12 2 18s0 11 3 14c2 2 4 2 7 2" />
          <path d="M15 11v14l9-7z" fill="currentColor" stroke="none" />
          <path d="M26 13v10" strokeWidth="2" />
        </Glyph>
        <MarkText>
          <p>溜溜自学</p>
          <p>ZiXUe.3D66.COM</p>
        </MarkText>
      </Watermark>
    </Desktop>
  );
}
